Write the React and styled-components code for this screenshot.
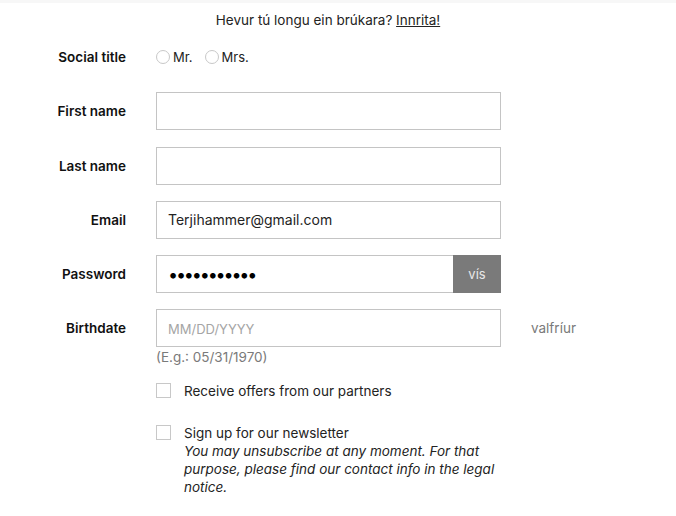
import styled, { createGlobalStyle } from 'styled-components';

const GlobalStyle = createGlobalStyle`
    body {
        margin: 0;
        background: #fff;
        font-family: Inter, "Noto Sans", "Liberation Sans", sans-serif;
        color: #232323;
    }
`;

const App = () => {
    return (
        <Page>
            <GlobalStyle />
            <LoginPrompt>
                Hevur tú longu ein brúkara? <LoginLink href="#">Innrita!</LoginLink>
            </LoginPrompt>
            <Form onSubmit={(e) => e.preventDefault()}>
                <Row $tall={38}>
                    <Label>Social title</Label>
                    <RadioGroup>
                        <RadioOption>
                            <Radio />
                            Mr.
                        </RadioOption>
                        <RadioOption>
                            <Radio />
                            Mrs.
                        </RadioOption>
                    </RadioGroup>
                </Row>
                <Row>
                    <Label>First name</Label>
                    <Field>
                        <Input type="text" defaultValue="" />
                    </Field>
                </Row>
                <Row>
                    <Label>Last name</Label>
                    <Field>
                        <Input type="text" defaultValue="" />
                    </Field>
                </Row>
                <Row>
                    <Label>Email</Label>
                    <Field>
                        <Input type="email" defaultValue="Terjihammer@gmail.com" />
                    </Field>
                </Row>
                <Row>
                    <Label>Password</Label>
                    <Field>
                        <PasswordInput type="password" defaultValue="hammer12345" />
                        <ShowButton type="button">vís</ShowButton>
                    </Field>
                </Row>
                <Row $noGap>
                    <Label>Birthdate</Label>
                    <Field>
                        <Input type="text" placeholder="MM/DD/YYYY" />
                    </Field>
                    <Optional>valfríur</Optional>
                </Row>
                <Hint>(E.g.: 05/31/1970)</Hint>
                <CheckRow>
                    <Checkbox />
                    <CheckText>Receive offers from our partners</CheckText>
                </CheckRow>
                <CheckRow>
                    <Checkbox />
                    <CheckText>
                        Sign up for our newsletter
                        <Note>
                            You may unsubscribe at any moment. For that purpose, please find our contact info in the legal notice.
                        </Note>
                    </CheckText>
                </CheckRow>
            </Form>
        </Page>
    );
};

export default App;

const Page = styled.div`
    width: 676px;
    min-height: 516px;
    box-sizing: border-box;
    border-top: 3px solid #f7f7f7;
`;

const LoginPrompt = styled.p`
    margin: 0;
    padding: 7px 20px 0 0;
    text-align: center;
    font-size: 13.5px;
    line-height: 20px;
    color: #232323;
`;

const LoginLink = styled.a`
    color: #232323;
    text-decoration: underline;
`;

const Form = styled.form`
    margin-top: 8px;
`;

const Row = styled.div`
    display: grid;
    grid-template-columns: 126px 345px auto;
    column-gap: 30px;
    align-items: center;
    min-height: ${(p) => p.$tall || 38}px;
    margin-bottom: ${(p) => (p.$noGap ? 0 : 16.25)}px;
`;

const Label = styled.label`
    text-align: right;
    font-size: 13.5px;
    font-weight: 600;
    color: #111;
`;

const RadioGroup = styled.div`
    display: flex;
    align-items: center;
    gap: 12px;
    font-size: 13px;
    color: #232323;
`;

const RadioOption = styled.span`
    display: flex;
    align-items: center;
    gap: 3px;
`;

const Radio = styled.span`
    width: 14px;
    height: 14px;
    box-sizing: border-box;
    border: 1px solid #c8c8c8;
    border-radius: 50%;
`;

const Field = styled.div`
    display: flex;
    height: 38px;
`;

const Input = styled.input`
    flex: 1;
    min-width: 0;
    box-sizing: border-box;
    height: 38px;
    border: 1px solid #c4c4c4;
    padding: 0 11px;
    font-family: inherit;
    font-size: 14px;
    color: #232323;
    outline: none;

    &::placeholder {
        color: #a5a5a5;
        font-size: 13px;
    }
`;

const PasswordInput = styled(Input)`
    border-right: none;
    font-size: 18px;
    letter-spacing: -2.2px;
    color: #000;
`;

const ShowButton = styled.button`
    width: 48px;
    border: none;
    background: #7a7a7a;
    color: #e8e8e8;
    font-family: inherit;
    font-size: 13px;
    padding: 0;
`;

const Optional = styled.span`
    font-size: 13.5px;
    color: #7a7a7a;
`;

const Hint = styled.div`
    margin: 1px 0 16px 156px;
    font-size: 13.5px;
    line-height: 18px;
    color: #7a7a7a;
`;

const CheckRow = styled.div`
    display: flex;
    align-items: flex-start;
    gap: 13px;
    margin-left: 156px;
    margin-bottom: 24px;
    width: 344px;
`;

const Checkbox = styled.span`
    flex: none;
    width: 15px;
    height: 15px;
    margin-top: 1px;
    box-sizing: border-box;
    border: 1px solid #c8c8c8;
`;

const CheckText = styled.div`
    font-size: 13.5px;
    line-height: 18px;
    color: #232323;
`;

const Note = styled.em`
    display: block;
    font-style: italic;
`;
